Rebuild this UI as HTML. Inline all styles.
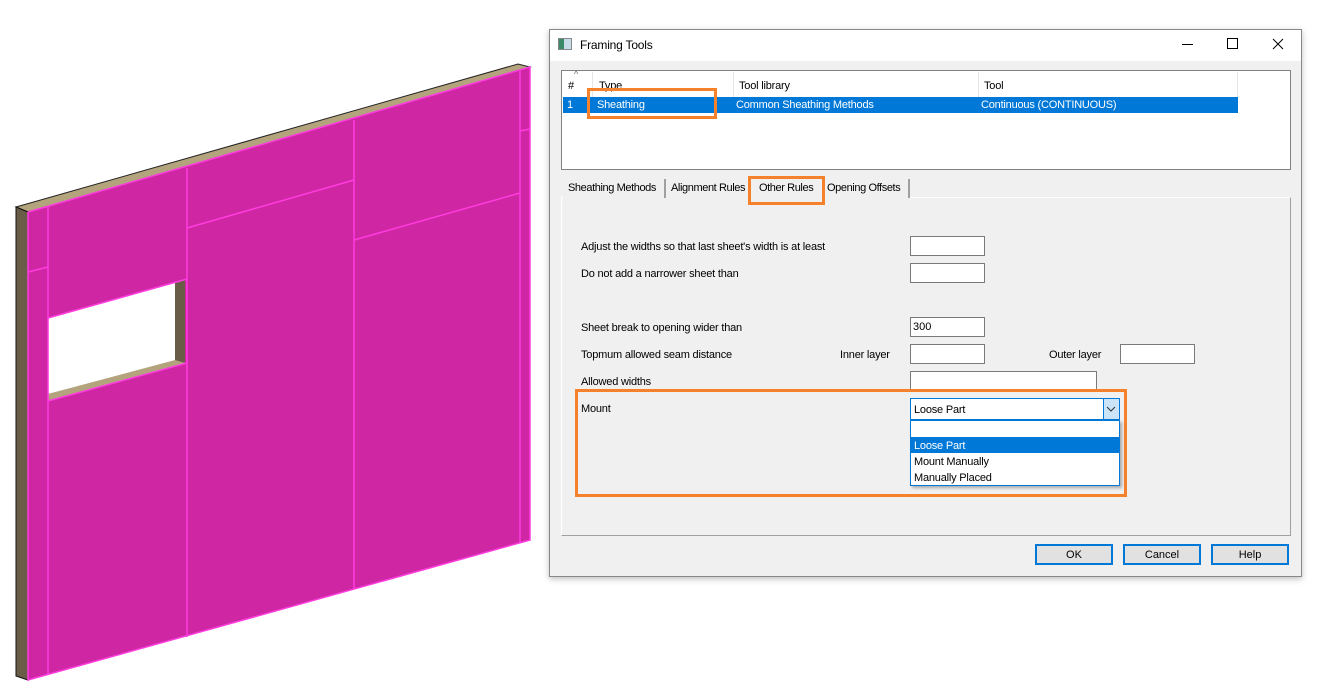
<!DOCTYPE html>
<html><head><meta charset="utf-8"><style>
*{margin:0;padding:0;box-sizing:border-box}
body{width:1318px;height:694px;background:#fff;position:relative;overflow:hidden;font-family:"Liberation Sans",sans-serif;font-size:11px;color:#000}
.a{position:absolute}
.t{position:absolute;white-space:nowrap;font-size:11px;letter-spacing:-0.2px}
.in{position:absolute;background:#fff;border:1px solid #7a7a7a;height:20px}
.or{position:absolute;border:3px solid #f5822a}
.btn{position:absolute;width:78px;height:21px;border:2px solid #0078d7;background:#e1e1e1;text-align:center;line-height:18px;font-size:11px}
.tab{position:absolute;top:179px;height:19px;background:#f0f0f0;border-right:2px solid #a0a0a0;line-height:18px;padding-left:5px;font-size:11px;letter-spacing:-0.4px;white-space:nowrap;overflow:hidden}
</style></head><body>
<svg class="a" style="left:0;top:0" width="545" height="694">
<polygon points="16,207 518,64 530,67 28,212" fill="#b3a47e" stroke="#222" stroke-width="1"/>
<polygon points="16,207 28,212 28,680 16,676" fill="#6a5d48" stroke="#111" stroke-width="1"/>
<polygon points="28,212 530,67 530,540 28,680" fill="#cf27a4"/>
<polygon points="48,318 185,280 185,360 48,394" fill="#fff"/>
<polygon points="175,283 185,280 185,362 175,364" fill="#6a5d48"/>
<polygon points="48,394 175,360 185,363 48,401" fill="#b3a47e"/>
<g stroke="#ff3ce0" stroke-width="1.5" fill="none">
<polyline points="28,212 530,67 530,540 28,680 28,212"/>
<line x1="48" y1="207" x2="48" y2="675"/>
<line x1="187" y1="168" x2="187" y2="637"/>
<line x1="354" y1="120" x2="354" y2="589"/>
<line x1="520" y1="70" x2="520" y2="543"/>
<line x1="28" y1="272" x2="48" y2="267"/>
<line x1="187" y1="228" x2="354" y2="180"/>
<line x1="354" y1="240" x2="520" y2="193"/>
<line x1="520" y1="131" x2="530" y2="129"/>
<line x1="48" y1="318" x2="187" y2="279"/>
<line x1="48" y1="401" x2="187" y2="363"/>
</g>
</svg>

<div class="a" style="left:549px;top:29px;width:753px;height:548px;background:#f0f0f0;border:1px solid #888;box-shadow:0 2px 6px rgba(0,0,0,.25)"></div>
<div class="a" style="left:550px;top:30px;width:751px;height:31px;background:#fff"></div>
<div class="a" style="left:558px;top:38px;width:14px;height:12px;border:1px solid #888;background:linear-gradient(90deg,#3a8a6a 40%,#c8dbe8 40%)"></div>
<div class="t" style="left:580px;top:38px;font-size:12px">Framing Tools</div>
<div class="a" style="left:1182px;top:44px;width:11px;height:1px;background:#000"></div>
<div class="a" style="left:1227px;top:38px;width:11px;height:11px;border:1px solid #000"></div>
<svg class="a" style="left:1272px;top:38px" width="12" height="12"><path d="M1 1L11 11M11 1L1 11" stroke="#000" stroke-width="1"/></svg>

<div class="a" style="left:561px;top:70px;width:730px;height:100px;background:#fff;border:1px solid #828282"></div>
<div class="a" style="left:563px;top:72px;width:675px;height:25px;border-right:1px solid #e5e5e5"></div>
<div class="a" style="left:592px;top:72px;width:1px;height:25px;background:#e5e5e5"></div>
<div class="a" style="left:733px;top:72px;width:1px;height:25px;background:#e5e5e5"></div>
<div class="a" style="left:978px;top:72px;width:1px;height:25px;background:#e5e5e5"></div>
<div class="t" style="left:574px;top:69px;font-size:9px;color:#666">^</div>
<div class="t" style="left:568px;top:80px">#</div>
<div class="t" style="left:599px;top:80px">Type</div>
<div class="t" style="left:739px;top:80px">Tool library</div>
<div class="t" style="left:984px;top:80px">Tool</div>
<div class="a" style="left:563px;top:97px;width:675px;height:16px;background:#0078d7"></div>
<div class="t" style="left:567px;top:99px;color:#fff">1</div>
<div class="t" style="left:597px;top:99px;color:#fff">Sheathing</div>
<div class="t" style="left:736px;top:99px;color:#fff">Common Sheathing Methods</div>
<div class="t" style="left:981px;top:99px;color:#fff">Continuous (CONTINUOUS)</div>
<div class="or" style="left:587px;top:88px;width:130px;height:31px"></div>

<div class="a" style="left:561px;top:197px;width:730px;height:339px;border:1px solid #a0a0a0;border-top-color:#fff;border-left-color:#fff;background:#f0f0f0"></div>
<div class="tab" style="left:563px;width:103px">Sheathing Methods</div>
<div class="tab" style="left:666px;width:84px">Alignment Rules</div>
<div class="tab" style="left:750px;width:75px;padding-left:9px">Other Rules</div>
<div class="tab" style="left:825px;width:85px;padding-left:2px">Opening Offsets</div>
<div class="or" style="left:748px;top:176px;width:77px;height:29px"></div>

<div class="t" style="left:581px;top:241px">Adjust the widths so that last sheet's width is at least</div>
<div class="in" style="left:910px;top:236px;width:75px"></div>
<div class="t" style="left:581px;top:268px">Do not add a narrower sheet than</div>
<div class="in" style="left:910px;top:263px;width:75px"></div>
<div class="t" style="left:581px;top:322px">Sheet break to opening wider than</div>
<div class="in" style="left:910px;top:317px;width:75px;padding:3px 0 0 2px">300</div>
<div class="t" style="left:581px;top:349px">Topmum allowed seam distance</div>
<div class="t" style="left:840px;top:349px">Inner layer</div>
<div class="in" style="left:910px;top:344px;width:75px"></div>
<div class="t" style="left:1049px;top:349px">Outer layer</div>
<div class="in" style="left:1120px;top:344px;width:75px"></div>
<div class="t" style="left:581px;top:376px">Allowed widths</div>
<div class="in" style="left:910px;top:371px;width:187px"></div>
<div class="or" style="left:575px;top:389px;width:552px;height:108px;background:#f0f0f0"></div>
<div class="t" style="left:581px;top:403px">Mount</div>
<div class="a" style="left:910px;top:398px;width:210px;height:22px;background:#fff;border:1px solid #0078d7"></div>
<div class="t" style="left:914px;top:404px">Loose Part</div>
<div class="a" style="left:1103px;top:399px;width:16px;height:20px;background:#cce4f7;border-left:1px solid #0078d7"></div>
<svg class="a" style="left:1106px;top:405px" width="10" height="8"><path d="M1 2L5 6L9 2" stroke="#333" fill="none"/></svg>
<div class="a" style="left:910px;top:420px;width:210px;height:66px;background:#fff;border:1px solid #0078d7;box-shadow:2px 2px 3px rgba(0,0,0,.3)"></div>
<div class="a" style="left:911px;top:437px;width:208px;height:16px;background:#0078d7"></div>
<div class="t" style="left:914px;top:440px;color:#fff">Loose Part</div>
<div class="t" style="left:914px;top:456px">Mount Manually</div>
<div class="t" style="left:914px;top:472px">Manually Placed</div>

<div class="btn" style="left:1035px;top:544px">OK</div>
<div class="btn" style="left:1123px;top:544px">Cancel</div>
<div class="btn" style="left:1211px;top:544px">Help</div>
</body></html>
